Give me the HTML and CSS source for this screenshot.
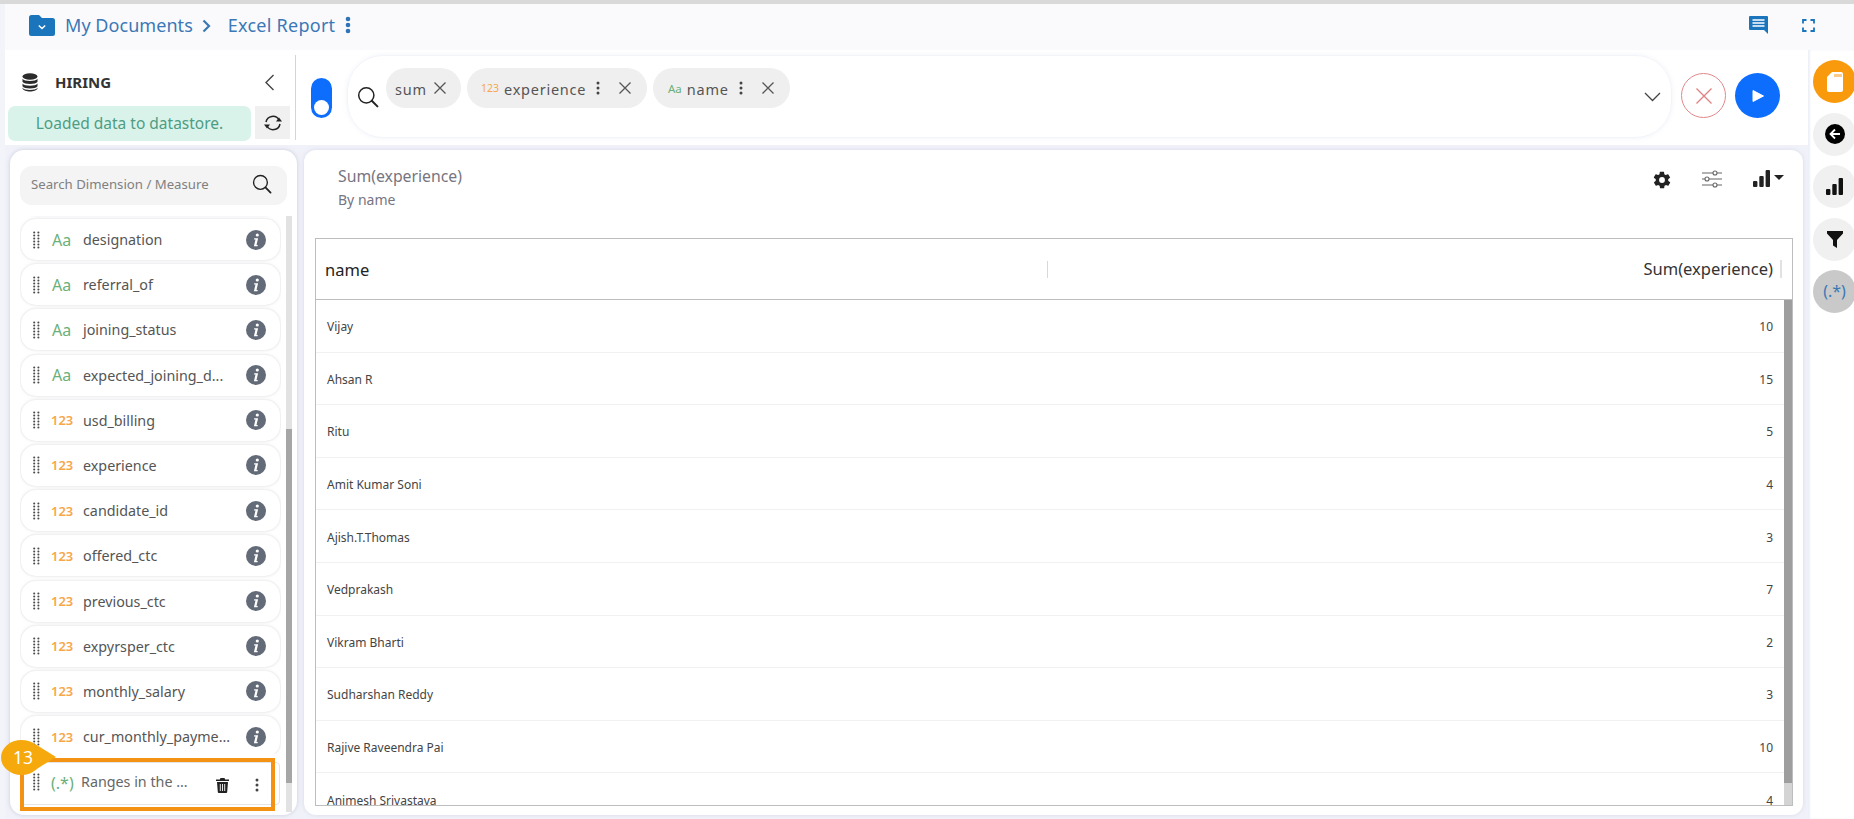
FILE: index.html
```html
<!DOCTYPE html>
<html lang="en">
<head>
<meta charset="utf-8">
<title>Excel Report</title>
<link rel="stylesheet" href="styles.css">
</head>
<body>
<svg class="defs" width="0" height="0" aria-hidden="true">
  <symbol id="grip" viewBox="0 0 7 18"><g fill="#4a4a4a"><circle cx="1.2" cy="1.5" r="1.05"/><circle cx="5.4" cy="1.5" r="1.05"/><circle cx="1.2" cy="4.5" r="1.05"/><circle cx="5.4" cy="4.5" r="1.05"/><circle cx="1.2" cy="7.5" r="1.05"/><circle cx="5.4" cy="7.5" r="1.05"/><circle cx="1.2" cy="10.5" r="1.05"/><circle cx="5.4" cy="10.5" r="1.05"/><circle cx="1.2" cy="13.5" r="1.05"/><circle cx="5.4" cy="13.5" r="1.05"/><circle cx="1.2" cy="16.5" r="1.05"/><circle cx="5.4" cy="16.5" r="1.05"/></g></symbol>
  <symbol id="info" viewBox="0 0 20 20"><circle cx="10" cy="10" r="10" fill="#636b78"/><circle cx="11.300" cy="5" r="1.600" fill="#fff"/><path d="M8.200 8.300h3.900l-1.600 6.700h1.300l-.3 1.200H7.900l1.600-6.700H8z" fill="#fff"/></symbol>
  <symbol id="search" viewBox="0 0 22 22"><circle cx="9.3" cy="9.3" r="7.6" fill="none" stroke="#222" stroke-width="1.5"/><path d="M14.8 14.8l5.6 5.6" stroke="#222" stroke-width="2" stroke-linecap="round"/></symbol>
  <symbol id="x" viewBox="0 0 14 14"><path d="M1.5 1.5l11 11M12.5 1.5l-11 11" stroke="#555" stroke-width="1.3" fill="none"/></symbol>
  <symbol id="kebab" viewBox="0 0 4 14"><circle cx="2" cy="2" r="1.5" fill="#444"/><circle cx="2" cy="7" r="1.5" fill="#444"/><circle cx="2" cy="12" r="1.5" fill="#444"/></symbol>
  <symbol id="bars" viewBox="0 0 17 17"><rect x="0" y="11" width="4.4" height="6" rx="1" fill="currentColor"/><rect x="6.3" y="6" width="4.4" height="11" rx="1" fill="currentColor"/><rect x="12.6" y="0" width="4.4" height="17" rx="1" fill="currentColor"/></symbol>
</svg>

<div class="app">
  <div class="topline"></div>
  <header class="topbar">
    <svg class="folder" viewBox="0 0 26 21"><path d="M2.500 0h7.500l3 3h10.500a2.500 2.500 0 0 1 2.500 2.500v13a2.500 2.500 0 0 1-2.500 2.500h-21a2.500 2.500 0 0 1-2.500-2.500v-16a2.500 2.500 0 0 1 2.500-2.500z" fill="#1b75bc"/><path d="M9.800 10.500l3.200 3 3.200-3" stroke="#fff" stroke-width="1.500" fill="none"/></svg>
    <span class="crumb">My Documents</span>
    <svg class="crumb-chevron" viewBox="0 0 9 14"><path d="M1.500 1.500l5.500 5.500-5.500 5.500" stroke="#3b78b5" stroke-width="2.200" fill="none"/></svg>
    <span class="crumb crumb-report">Excel Report</span>
    <svg class="crumb-kebab" viewBox="0 0 6 18"><circle cx="3" cy="3" r="2.300" fill="#2f74b5"/><circle cx="3" cy="9" r="2.300" fill="#2f74b5"/><circle cx="3" cy="15" r="2.300" fill="#2f74b5"/></svg>
    <div class="topbar-actions">
      <svg class="comment" viewBox="0 0 19 18"><path d="M1 0h17a1 1 0 0 1 1 1v17l-4-4H1a1 1 0 0 1-1-1V1a1 1 0 0 1 1-1z" fill="#1b75bc"/><path d="M3.500 4h12M3.500 7h12M3.500 10h12" stroke="#fff" stroke-width="1.500"/></svg>
      <svg class="fullscreen" viewBox="0 0 13 13"><path d="M1 4.500V1h3.500M8.500 1H12v3.500M12 8.500V12H8.500M4.500 12H1V8.500" stroke="#1b75bc" stroke-width="1.800" fill="none"/></svg>
    </div>
  </header>

  <div class="workspace">
    <div class="main">
      <section class="query-row">
        <div class="dataset">
          <div class="dataset-title">
            <svg class="db" viewBox="0 0 16 19"><ellipse cx="8" cy="3.500" rx="7.500" ry="3.200" fill="#2b2b2b"/><path d="M.5 5.800c1.500 3 13.500 3 15 0v3c-1.500 3-13.500 3-15 0zM.5 10.400c1.500 3 13.500 3 15 0v2.800c-1.500 3-13.500 3-15 0zM.5 14.800c1.500 3 13.500 3 15 0v.6c-1.500 4-13.500 4-15 0z" fill="#2b2b2b"/></svg>
            <span class="dataset-name">HIRING</span>
            <svg class="collapse" viewBox="0 0 11 17"><path d="M9.500 1L2 8.500 9.500 16" stroke="#444" stroke-width="1.400" fill="none"/></svg>
          </div>
          <div class="dataset-status">
            <div class="status-msg">Loaded data to datastore.</div>
            <div class="refresh"><svg viewBox="0 0 18 16" width="18" height="16"><path d="M2 7a7 7 0 0 1 13-2M16 9a7 7 0 0 1-13 2" stroke="#222" stroke-width="1.500" fill="none"/><path d="M12 6.500h6l-3-4zM6 9.500H0l3 4z" fill="#222"/></svg></div>
          </div>
        </div>
        <div class="toggle"><span class="toggle-knob"></span></div>
        <div class="query-box">
          <svg class="query-search"><use href="#search"/></svg>
          <div class="chip chip-sum"><span class="chip-text">sum</span><svg class="chip-x"><use href="#x"/></svg></div>
          <div class="chip chip-exp"><span class="chip-type num">123</span><span class="chip-text">experience</span><svg class="chip-kebab"><use href="#kebab"/></svg><svg class="chip-x"><use href="#x"/></svg></div>
          <div class="chip chip-name"><span class="chip-type txt">Aa</span><span class="chip-text">name</span><svg class="chip-kebab"><use href="#kebab"/></svg><svg class="chip-x"><use href="#x"/></svg></div>
          <svg class="query-chevron" viewBox="0 0 17 10"><path d="M1 1l7.500 7.500L16 1" stroke="#444" stroke-width="1.300" fill="none"/></svg>
        </div>
        <button class="round-btn cancel" type="button" aria-label="Cancel"><svg viewBox="0 0 18 18" width="18" height="18"><path d="M1.500 1.500l15 15M16.500 1.500l-15 15" stroke="#e07f7f" stroke-width="1.300"/></svg></button>
        <button class="round-btn run" type="button" aria-label="Run"><svg viewBox="0 0 12 12" width="12" height="12"><path d="M1 .5l10.500 5.500L1 11.500z" fill="#fff" stroke="#fff" stroke-linejoin="round"/></svg></button>
      </section>

      <section class="panels">
        <aside class="fields">
          <div class="field-search"><span>Search Dimension / Measure</span><svg><use href="#search"/></svg></div>
          <div class="field-body">
            <div class="field-list">
              <div class="field-clip">
                <div class="field-item field-cut"></div>
                <div class="field-item"><svg class="grip"><use href="#grip"/></svg><span class="type txt">Aa</span><span class="fname">designation</span><svg class="info"><use href="#info"/></svg></div>
                <div class="field-item"><svg class="grip"><use href="#grip"/></svg><span class="type txt">Aa</span><span class="fname">referral_of</span><svg class="info"><use href="#info"/></svg></div>
                <div class="field-item"><svg class="grip"><use href="#grip"/></svg><span class="type txt">Aa</span><span class="fname">joining_status</span><svg class="info"><use href="#info"/></svg></div>
                <div class="field-item"><svg class="grip"><use href="#grip"/></svg><span class="type txt">Aa</span><span class="fname">expected_joining_d...</span><svg class="info"><use href="#info"/></svg></div>
                <div class="field-item"><svg class="grip"><use href="#grip"/></svg><span class="type num">123</span><span class="fname">usd_billing</span><svg class="info"><use href="#info"/></svg></div>
                <div class="field-item"><svg class="grip"><use href="#grip"/></svg><span class="type num">123</span><span class="fname">experience</span><svg class="info"><use href="#info"/></svg></div>
                <div class="field-item"><svg class="grip"><use href="#grip"/></svg><span class="type num">123</span><span class="fname">candidate_id</span><svg class="info"><use href="#info"/></svg></div>
                <div class="field-item"><svg class="grip"><use href="#grip"/></svg><span class="type num">123</span><span class="fname">offered_ctc</span><svg class="info"><use href="#info"/></svg></div>
                <div class="field-item"><svg class="grip"><use href="#grip"/></svg><span class="type num">123</span><span class="fname">previous_ctc</span><svg class="info"><use href="#info"/></svg></div>
                <div class="field-item"><svg class="grip"><use href="#grip"/></svg><span class="type num">123</span><span class="fname">expyrsper_ctc</span><svg class="info"><use href="#info"/></svg></div>
                <div class="field-item"><svg class="grip"><use href="#grip"/></svg><span class="type num">123</span><span class="fname">monthly_salary</span><svg class="info"><use href="#info"/></svg></div>
                <div class="field-item"><svg class="grip"><use href="#grip"/></svg><span class="type num">123</span><span class="fname">cur_monthly_payme...</span><svg class="info"><use href="#info"/></svg></div>
              </div>
              <div class="field-item field-custom">
                <svg class="grip"><use href="#grip"/></svg><span class="type txt regex">(.*)</span><span class="fname custom-name">Ranges in the ...</span>
                <svg class="trash" viewBox="0 0 13 15"><path d="M4.500 0h4l.7 1.500H13V3H0V1.500h3.800zM1 4h11l-.8 10a1 1 0 0 1-1 1H2.800a1 1 0 0 1-1-1z" fill="#222"/><path d="M4.300 6v7M6.500 6v7M8.700 6v7" stroke="#fff" stroke-width=".9"/></svg>
                <svg class="custom-kebab"><use href="#kebab"/></svg>
              </div>
              <div class="callout-box"></div>
              <div class="callout-badge">13</div>
            </div>
            <div class="vscroll field-scroll"><div class="vthumb"></div></div>
          </div>
        </aside>

        <main class="chart">
          <div class="chart-head">
            <div class="chart-titles">
              <div class="chart-title">Sum(experience)</div>
              <div class="chart-sub">By name</div>
            </div>
            <div class="chart-tools">
              <svg class="gear" viewBox="0 0 24 24"><path d="M19.400 13c.1-.3.100-.7.100-1s0-.7-.1-1l2.100-1.600c.2-.2.300-.4.100-.6l-2-3.500c-.1-.2-.4-.3-.6-.2l-2.500 1c-.5-.4-1.100-.7-1.700-1l-.4-2.600c0-.3-.2-.5-.5-.5h-4c-.2 0-.4.200-.5.400l-.4 2.700c-.6.300-1.200.6-1.700 1l-2.500-1c-.2-.1-.5 0-.6.200l-2 3.500c-.1.200-.1.500.1.600L4.600 11c0 .3-.1.700-.1 1s0 .7.100 1l-2.100 1.600c-.2.200-.3.400-.1.600l2 3.500c.1.200.4.300.6.200l2.500-1c.5.400 1.100.7 1.700 1l.4 2.600c0 .3.200.5.500.5h4c.2 0 .4-.2.500-.4l.4-2.700c.6-.3 1.200-.6 1.700-1l2.500 1c.2.100.5 0 .6-.2l2-3.500c.1-.2.100-.5-.1-.6zM12 15.500a3.500 3.500 0 1 1 0-7 3.500 3.500 0 0 1 0 7z" fill="#222"/></svg>
              <svg class="sliders" viewBox="0 0 20 18"><path d="M0 3h11M15 3h5M0 9h3M7 9h13M0 15h11M15 15h5" stroke="#666" stroke-width="1.100"/><circle cx="13" cy="3" r="2" fill="none" stroke="#666" stroke-width="1.100"/><circle cx="5" cy="9" r="2" fill="none" stroke="#666" stroke-width="1.100"/><circle cx="13" cy="15" r="2" fill="none" stroke="#666" stroke-width="1.100"/></svg>
              <div class="chart-type"><svg class="type-bars"><use href="#bars"/></svg><span class="caret"></span></div>
            </div>
          </div>
          <div class="grid">
            <div class="grid-head">
              <div class="gh gh-name">name</div>
              <div class="gh gh-val">Sum(experience)</div>
            </div>
            <div class="grid-body">
              <div class="grid-rows">
                <div class="row"><span>Vijay</span><span>10</span></div>
                <div class="row"><span>Ahsan R</span><span>15</span></div>
                <div class="row"><span>Ritu</span><span>5</span></div>
                <div class="row"><span>Amit Kumar Soni</span><span>4</span></div>
                <div class="row"><span>Ajish.T.Thomas</span><span>3</span></div>
                <div class="row"><span>Vedprakash</span><span>7</span></div>
                <div class="row"><span>Vikram Bharti</span><span>2</span></div>
                <div class="row"><span>Sudharshan Reddy</span><span>3</span></div>
                <div class="row"><span>Rajive Raveendra Pai</span><span>10</span></div>
                <div class="row"><span>Animesh Srivastava</span><span>4</span></div>
              </div>
              <div class="vscroll grid-scroll"><div class="vthumb"></div></div>
            </div>
          </div>
        </main>
      </section>
    </div>

    <nav class="rail">
      <div class="rail-btn rail-active"><svg viewBox="0 0 16 20" width="16" height="20"><path d="M5 0h9a2 2 0 0 1 2 2v16a2 2 0 0 1-2 2H2a2 2 0 0 1-2-2V5z" fill="#fff"/><path d="M8 2v3M10 2v3M12 2v3M14 2v3" stroke="#f39a12" stroke-width="1"/></svg></div>
      <div class="rail-btn"><svg viewBox="0 0 20 20" width="20" height="20"><circle cx="10" cy="10" r="10" fill="#000"/><path d="M15 10H6M10 5.500L5.500 10l4.500 4.500" stroke="#fff" stroke-width="1.800" fill="none"/></svg></div>
      <div class="rail-btn"><svg class="rail-bars"><use href="#bars"/></svg></div>
      <div class="rail-btn"><svg viewBox="0 0 16 17" width="16" height="17"><path d="M0 0h16v2.500L10 9v8l-4-2.500V9L0 2.500z" fill="#111"/></svg></div>
      <div class="rail-btn rail-regex">(.*)</div>
    </nav>
  </div>
</div>
</body>
</html>
```
FILE: styles.css
```css
* { box-sizing: border-box; }
html, body { margin: 0; padding: 0; height: 100%; overflow: hidden; }
body { font-family: "Noto Sans", "Open Sans", sans-serif; background: #f3f4fa; color: #444; }
.defs { position: absolute; }
.app { width: 1854px; height: 819px; display: flex; flex-direction: column; overflow: hidden; }

.topline { height: 4px; background: #d9d9d9; flex: none; }
.topbar { height: 46px; flex: none; display: flex; align-items: center; background: #fafafd; margin-left: 5px; padding-left: 24px; }
.folder { width: 26px; height: 21px; margin-right: 10px; margin-top: -4px; }
.crumb { font-size: 18px; color: #3b78b5; margin-top: -4px; letter-spacing: 0.05px; }
.crumb-chevron { width: 9px; height: 14px; margin-left: 9px; margin-top: -2px; }
.crumb-report { margin-left: 17px; letter-spacing: .25px; }
.crumb-kebab { width: 6px; height: 18px; margin-left: 10px; margin-top: -4px; }
.topbar-actions { margin-left: auto; display: flex; align-items: center; margin-right: 39px; margin-top: -4px; }
.comment { width: 19px; height: 18px; }
.fullscreen { width: 13px; height: 13px; margin-left: 34px; }

.workspace { flex: 1; display: flex; min-height: 0; }
.main { width: 1808px; flex: none; display: flex; flex-direction: column; padding-left: 5px; }

.query-row { height: 95px; flex: none; display: flex; align-items: flex-start; background: #fff; box-shadow: 0 1px 0 #eef0f8; }
.dataset { width: 291px; height: 85px; margin-top: 5px; border-right: 1px solid #d5d5d5; flex: none; padding: 0 5px 0 3px; }
.dataset-title { height: 50px; display: flex; align-items: center; padding: 4px 0 0 14px; }
.db { width: 16px; height: 19px; }
.dataset-name { font-size: 15px; font-weight: 700; color: #333; margin-left: 17px; }
.collapse { width: 11px; height: 17px; margin-left: auto; margin-right: 15px; }
.dataset-status { display: flex; gap: 4px; margin-top: 1px; }
.status-msg { width: 243px; height: 35px; background: #d9f3ea; border-radius: 7px; color: #4e9c84; font-size: 15.500px; line-height: 34px; text-align: center; }
.refresh { width: 35px; height: 33px; background: #f0f0f0; display: flex; align-items: center; justify-content: center; }
.toggle { width: 21px; height: 40px; margin: 28px 0 0 15px; background: #0d6efd; border-radius: 11px; flex: none; display: flex; align-items: flex-end; padding: 0 0 3px 3px; }
.toggle-knob { width: 15px; height: 15px; background: #fff; border-radius: 50%; }
.query-box { width: 1325px; height: 83px; margin: 5px 0 0 15px; flex: none; border: 1px solid #f3f4fa; border-radius: 36px; box-shadow: 0 0 5px rgba(220,224,240,.4); display: flex; align-items: flex-start; padding: 12px 0 0 9px; }
.query-search { width: 22px; height: 22px; margin: 18px 7px 0 0; flex: none; }
.chip { height: 40px; border-radius: 20px; background: #f0efef; display: flex; align-items: center; flex: none; margin-right: 6px; }
.chip-sum { width: 75px; padding-left: 9px; }
.chip-exp { width: 180px; padding-left: 14px; }
.chip-name { width: 137px; padding-left: 15px; }
.chip-text { font-size: 14.500px; color: #555; letter-spacing: .75px; margin-top: 1px; }
.chip-type { font-size: 10.500px; margin-right: 5px; }
.chip-type.txt { font-size: 11.500px; }
.chip-x { width: 14px; height: 14px; margin-left: 6px; flex: none; }
.chip-exp .chip-kebab { margin-left: 10px; }
.chip-exp .chip-x { margin-left: 18px; }
.chip-name .chip-kebab { margin-left: 10px; }
.chip-name .chip-x { margin-left: 18px; }
.chip-kebab { width: 4px; height: 14px; flex: none; }
.query-chevron { width: 17px; height: 10px; margin: 24px 10px 0 auto; }
.num { color: #f7a74a; }
.txt { color: #6bb07a; }
.round-btn { width: 45px; height: 45px; border-radius: 50%; padding: 0; display: flex; align-items: center; justify-content: center; flex: none; margin-top: 23px; background: #fff; }
.cancel { margin-left: 9px; border: 1.500px solid #e08a8a; }
.run { margin-left: 9px; border: 0; background: #0d6efd; }

.panels { flex: 1; display: flex; min-height: 0; padding: 5px 5px 4px 0; gap: 7px; background: #f1f2f9; }
.fields { width: 287px; flex: none; background: #fff; border-radius: 14px; box-shadow: 0 0 4px rgba(170,175,200,.6); margin-left: 5px; display: flex; flex-direction: column; padding: 16px 5px 3px 10px; }
.field-search { height: 39px; flex: none; background: #f4f4f4; border-radius: 12px; margin-right: 5px; display: flex; align-items: center; padding: 0 15px 3px 11px; font-size: 13.200px; color: #808080; }
.field-search svg { width: 20px; height: 20px; margin-left: auto; }
.field-body { flex: 1; min-height: 0; display: flex; margin-top: 11px; }
.field-list { width: 261px; flex: none; position: relative; }
.field-clip { height: 538px; overflow: hidden; }
.field-item { height: 41px; border-radius: 15px; background: #fff; box-shadow: 0 0 3px rgba(180,180,190,.55); margin: 0 0 4.200px; display: flex; align-items: center; padding: 0 14px 0 12px; position: relative; }
.field-clip .field-item { margin-left: 1px; margin-right: 1px; }
.field-cut { margin-top: -42px; margin-bottom: 4px; }
.grip { width: 7px; height: 18px; flex: none; }
.type { width: 25px; margin-left: 12px; font-size: 16px; flex: none; }
.fname { margin-left: 6px; font-size: 14.300px; color: #555; white-space: nowrap; }
.info { width: 20px; height: 20px; margin-left: auto; flex: none; }
.num.type { font-size: 13px; font-weight: 600; margin-left: 11px; width: 26px; }
.field-custom { box-shadow: none; border: 1px solid #e4e4e4; margin: 8px 1px 0 0; height: 43px; padding-left: 12px; border-radius: 4px; }
.field-custom .grip { margin-top: -3px; }
.regex { font-size: 16px; width: 26px; margin-left: 11px; margin-top: -1px; }
.custom-name { margin: -5px 0 0 4px; color: #666; }
.trash { width: 13px; height: 15px; margin: 3px 0 0 28px; flex: none; }
.custom-kebab { width: 4px; height: 14px; margin: 3px 0 0 26px; flex: none; }
.callout-box { position: absolute; left: 0; top: 542px; width: 255px; height: 53px; border: 4px solid #f39213; }
.callout-badge { position: absolute; left: -19px; top: 524px; width: 41px; height: 35px; background: #f6a90c; color: #fff; border-radius: 50%; font-size: 17.500px; line-height: 34px; text-align: center; padding-left: 3px; }
.callout-badge::after { content: ""; position: absolute; left: 34px; top: 4px; border-left: 21px solid #f6a90c; border-top: 13px solid transparent; border-bottom: 13px solid transparent; }
.vscroll { background: #e2e2e2; flex: none; }
.vthumb { background: #a6a6a6; }
.field-scroll { width: 6px; margin-left: 5px; height: 596px; }
.field-scroll .vthumb { margin-top: 213px; height: 354px; }

.chart { flex: 1; background: #fff; border-radius: 12px; box-shadow: 0 0 4px rgba(190,195,220,.5); padding: 0 10px 9px 11px; display: flex; flex-direction: column; min-width: 0; }
.chart-head { height: 88px; flex: none; display: flex; justify-content: space-between; padding: 15px 9px 0 23px; }
.chart-title { font-size: 15.800px; color: #77757f; line-height: 22px; }
.chart-sub { font-size: 14px; color: #77757f; line-height: 22px; margin-top: 2px; }
.chart-tools { display: flex; align-items: flex-start; padding-top: 5px; }
.gear { width: 20px; height: 20px; }
.sliders { width: 20px; height: 18px; margin-left: 30px; }
.chart-type { display: flex; margin-left: 31px; color: #222; }
.type-bars { width: 17px; height: 17px; }
.caret { width: 0; height: 0; margin: 5px 0 0 4px; border-left: 5px solid transparent; border-right: 5px solid transparent; border-top: 5px solid #222; }

.grid { flex: 1; min-height: 0; border: 1px solid #bdbdbd; display: flex; flex-direction: column; }
.grid-head { height: 61px; flex: none; border-bottom: 1px solid #bdbdbd; display: flex; align-items: center; font-size: 16.500px; color: #222; padding: 0 19px 0 9px; }
.gh { white-space: nowrap; }
.gh-name { width: 723px; border-right: 1px solid #d8d8d8; line-height: 17px; height: 17px; display: flex; align-items: center; }
.gh-val { flex: 1; text-align: right; line-height: 22px; height: 22px; position: relative; color: #333; }
.gh-val::after { content: ""; position: absolute; right: -9px; top: 2px; width: 2px; height: 18px; background: #e2e2e2; }
.grid-body { flex: 1; min-height: 0; display: flex; }
.grid-rows { flex: 1; min-width: 0; overflow: hidden; }
.row { height: 52.600px; border-bottom: 1px solid #f1f1f1; display: flex; align-items: center; justify-content: space-between; padding: 2px 11px 0 11px; font-size: 12px; color: #444; }
.grid-scroll { width: 8px; background: #d4d4d4; }
.grid-scroll .vthumb { height: 483px; background: #9e9e9e; }

.rail { flex: 1; background: #fff; box-shadow: inset 2px 0 2px #eef0f7; display: flex; flex-direction: column; align-items: flex-start; padding: 10px 0 0 5px; gap: 9.500px; overflow: hidden; }
.rail-btn { width: 43px; height: 43px; flex: none; border-radius: 50%; background: #f0f0f0; display: flex; align-items: center; justify-content: center; }
.rail-active { background: #f89a0c; }
.rail-bars { width: 17px; height: 17px; color: #111; }
.rail-regex { background: #c9c9c9; color: #3b78b5; font-size: 16px; padding-bottom: 2px; }
```
